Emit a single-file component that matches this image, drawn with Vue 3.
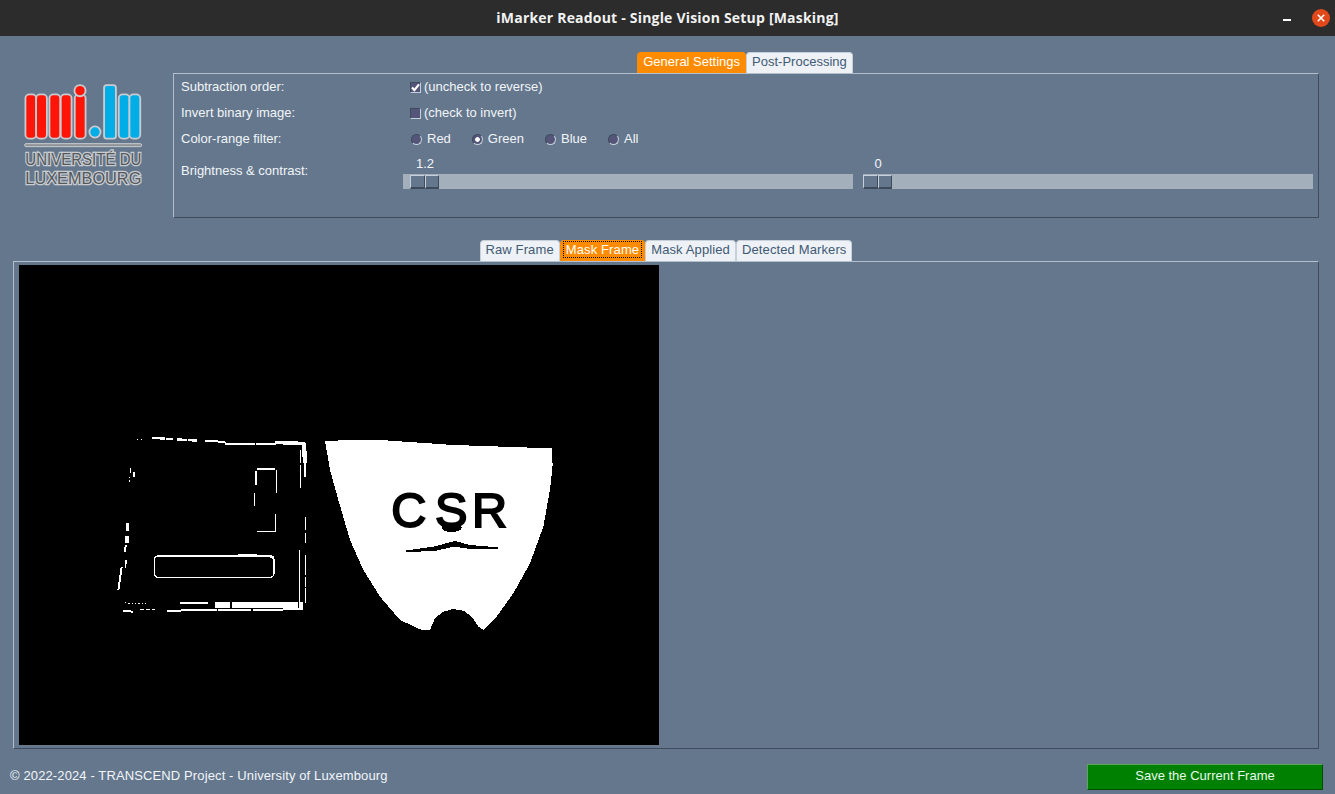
<template>
  <div class="window">
    <header class="titlebar">
      <span></span>
      <h1 class="titlebar__title">iMarker Readout - Single Vision Setup [Masking]</h1>
      <div class="titlebar__controls">
        <span class="titlebar__minimize"></span>
        <svg class="titlebar__close" width="18" height="18" viewBox="0 0 18 18">
          <circle cx="9" cy="9" r="9" fill="#e2491a" />
          <path d="M5.8 5.8l6.4 6.4M12.2 5.8l-6.4 6.4" stroke="#fff" stroke-width="1.6" />
        </svg>
      </div>
    </header>

    <section class="top">
      <div class="logo">
        <svg width="173" height="140" viewBox="0 0 519 420">
          <g class="logo__shapes" fill="#ff1408">
            <rect v-for="bar in redBars" :key="bar" :x="bar" y="106" width="27" height="127" rx="9" />
            <circle cx="240" cy="92" r="14" />
          </g>
          <g class="logo__shapes" fill="#00ade6">
            <circle cx="285" cy="216" r="14" />
            <rect x="315" y="78" width="30" height="155" rx="5" />
            <rect x="359" y="106" width="27" height="127" rx="9" />
            <rect x="391" y="106" width="27" height="127" rx="9" />
          </g>
          <rect x="74" y="251" width="351" height="9" rx="4" fill="#8f9397" stroke="#c8ccd1" stroke-width="3" />
          <text class="logo__text" x="76" y="315" textLength="348" lengthAdjust="spacingAndGlyphs">UNIVERSITÉ DU</text>
          <text class="logo__text" x="76" y="372" textLength="348" lengthAdjust="spacingAndGlyphs">LUXEMBOURG</text>
        </svg>
      </div>

      <div class="settings">
        <div class="tabs tabs--settings">
          <button
            v-for="tab in settingsTabs"
            :key="tab"
            class="tabs__tab"
            :class="{ 'tabs__tab--active': tab === 'General Settings' }"
          >
            <span class="tabs__label">{{ tab }}</span>
          </button>
        </div>

        <div class="panel settings__panel">
          <div class="field">
            <span class="field__label">Subtraction order:</span>
            <label class="check">
              <span class="check__box">
                <svg width="11" height="11" viewBox="0 0 11 11">
                  <path d="M2 5.5l2.4 2.6L9 2.4" fill="none" stroke="#fff" stroke-width="2.2" />
                </svg>
              </span>
              (uncheck to reverse)
            </label>
          </div>
          <div class="field">
            <span class="field__label">Invert binary image:</span>
            <label class="check">
              <span class="check__box"></span>
              (check to invert)
            </label>
          </div>
          <div class="field">
            <span class="field__label">Color-range filter:</span>
            <div class="radios">
              <label v-for="color in colors" :key="color" class="radio">
                <span class="radio__dot" :class="{ 'radio__dot--on': color === 'Green' }"></span>
                {{ color }}
              </label>
            </div>
          </div>
          <div class="field field--sliders">
            <span class="field__label field__label--slider">Brightness &amp; contrast:</span>
            <div class="sliders">
              <div v-for="slider in sliders" :key="slider.value" class="slider">
                <span class="slider__value" :style="{ marginLeft: slider.offset + 'px' }">{{ slider.value }}</span>
                <div class="slider__trough">
                  <div class="slider__thumb" :style="{ marginLeft: slider.offset + 'px' }">
                    <span class="slider__grip"></span>
                    <span class="slider__grip"></span>
                  </div>
                </div>
              </div>
            </div>
          </div>
        </div>
      </div>
    </section>

    <section class="frames">
      <div class="tabs tabs--frames">
        <button
          v-for="tab in frameTabs"
          :key="tab"
          class="tabs__tab"
          :class="{ 'tabs__tab--active': tab === 'Mask Frame' }"
        >
          <span class="tabs__label" :class="{ 'tabs__label--focus': tab === 'Mask Frame' }">{{ tab }}</span>
        </button>
      </div>
      <div class="panel frames__panel">
        <svg class="mask" width="640" height="480" viewBox="19 265 640 480" shape-rendering="crispEdges">
          <rect x="19" y="265" width="640" height="480" fill="#000" />

          <g transform="translate(110 420) scale(.3333)" stroke="#fff" fill="none">
            <line
              v-for="(s, i) in plateLines"
              :key="i"
              :x1="s[0]"
              :y1="s[1]"
              :x2="s[2]"
              :y2="s[3]"
              :stroke-width="s[4]"
              :stroke-dasharray="s[5]"
            />
            <rect x="133" y="408" width="359" height="64" rx="12" stroke-width="4" />
          </g>

          <g transform="translate(320 430) scale(.3333)">
            <polygon :points="shield" fill="#fff" />
            <text class="mask__csr" x="214 345 456" y="292">CSR</text>
            <ellipse cx="395" cy="293" rx="30" ry="13" fill="#000" />
            <polygon
              points="255,362 340,350 405,333 450,345 535,352 535,358 445,356 400,350 350,362 260,367"
              fill="#000"
            />
          </g>
        </svg>
      </div>
    </section>

    <footer class="footer">
      <span class="footer__text">© 2022-2024 - TRANSCEND Project - University of Luxembourg</span>
      <button class="footer__save">Save the Current Frame</button>
    </footer>
  </div>
</template>

<script setup>
const redBars = [79, 111, 151, 185, 227]
const settingsTabs = ['General Settings', 'Post-Processing']
const frameTabs = ['Raw Frame', 'Mask Frame', 'Mask Applied', 'Detected Markers']
const colors = ['Red', 'Green', 'Blue', 'All']

const sliders = [
  { value: '1.2', offset: 7 },
  { value: '0', offset: 0 },
]

// outline of the shield, in 3x crop coordinates
const shield =
  '15,32 180,30 400,45 695,55 698,105 690,180 670,290 630,400 580,490 530,560 490,600 475,590 455,560 430,542 400,537 370,545 345,565 330,600 305,600 240,570 180,500 130,420 90,330 55,210 30,120'

// x1, y1, x2, y2, width, dash
const plateLines = [
  [125, 53, 190, 58, 7, '40 3 20 3'],
  [200, 58, 260, 62, 7, '30 3 30 3'],
  [285, 62, 345, 66, 6],
  [345, 71, 500, 73, 7, '90 4 60 4'],
  [495, 68, 585, 70, 10],
  [582, 70, 585, 130, 13],
  [586, 130, 586, 172, 5],
  [572, 90, 572, 203, 4, '40 4 70 4'],
  [586, 290, 586, 380, 4, '40 8 30'],
  [586, 405, 586, 550, 4, '60 5 30 5'],
  [568, 390, 568, 545, 4],
  [170, 572, 580, 568, 6, '150 4 100 4'],
  [315, 555, 580, 555, 20, '45 5 200 3'],
  [210, 550, 295, 549, 7],
  [40, 573, 70, 575, 6],
  [90, 568, 135, 568, 3, '12 6'],
  [45, 549, 110, 552, 3, '4 6'],
  [82, 58, 100, 58, 4, '3 8'],
  [52, 310, 52, 332, 10],
  [50, 348, 50, 368, 12],
  [48, 375, 44, 395, 6],
  [48, 420, 46, 445, 5],
  [35, 440, 25, 510, 6],
  [62, 145, 62, 160, 4],
  [72, 157, 72, 170, 6],
  [58, 170, 58, 190, 3, '5 5'],
  [437, 152, 437, 196, 6],
  [440, 146, 496, 146, 6],
  [499, 150, 499, 220, 4],
  [433, 220, 433, 258, 4],
  [496, 282, 496, 335, 4],
  [441, 334, 496, 334, 4],
  [185, 408, 270, 409, 7],
  [385, 405, 440, 405, 5],
  [480, 408, 492, 414, 7],
]
</script>

<style scoped>
.window {
  width: 1335px;
  height: 794px;
  display: flex;
  flex-direction: column;
  overflow: hidden;
  background-color: #64778d;
  color: #f2f5f8;
  font-family: 'Liberation Sans', Arial, sans-serif;
  font-size: 13px;
}

.titlebar {
  height: 36px;
  flex: none;
  display: grid;
  grid-template-columns: 1fr auto 1fr;
  align-items: center;
  background-color: #2c2c2c;
}

.titlebar__title {
  margin: 0 0 1px;
  font-family: 'Open Sans', sans-serif;
  font-size: 14px;
  font-weight: 700;
  letter-spacing: 0.2px;
  color: #f2f2f2;
}

.titlebar__controls {
  display: flex;
  align-items: center;
  justify-content: flex-end;
  gap: 21px;
  padding-right: 5px;
}

.titlebar__minimize {
  width: 8px;
  height: 2px;
  margin-top: 4px;
  background-color: #fff;
}

.top {
  flex: none;
  display: flex;
  padding-top: 16px;
}

.logo {
  width: 173px;
  flex: none;
  padding-top: 8px;
}

.logo__shapes {
  stroke: #c8ccd1;
  stroke-width: 11px;
  paint-order: stroke;
}

.logo__text {
  font-size: 52px;
  fill: #55585b;
  stroke: #c8ccd1;
  stroke-width: 8px;
  paint-order: stroke;
}

.settings {
  width: 1146px;
}

.tabs {
  height: 21px;
  display: flex;
  justify-content: center;
}

.tabs--settings {
  padding-right: 2px;
}

.tabs__tab {
  height: 21px;
  padding: 0 2px 4px;
  border: 1px solid #c6d0da;
  border-bottom: none;
  border-radius: 4px 4px 0 0;
  background-color: #eef1f5;
  color: #3f5a75;
  font: inherit;
}

.tabs--frames .tabs__tab {
  letter-spacing: 0.12px;
}

.tabs__tab--active {
  border-color: #ff8c00;
  background-color: #ff8c00;
  color: #fff;
}

.tabs__label {
  display: block;
  padding: 0 2px;
  border: 1px solid transparent;
  line-height: 15px;
}

.tabs__label--focus {
  border: 1px dotted #000;
}

.panel {
  box-sizing: border-box;
  border: 1px solid #3d4b5c;
  border-top-color: #b4bfcc;
  border-left-color: #b4bfcc;
}

.settings__panel {
  height: 145px;
  padding: 0 5px 0 7px;
}

.field {
  box-sizing: border-box;
  height: 26px;
  padding-bottom: 2px;
  display: flex;
  align-items: center;
}

.field__label {
  width: 222px;
  flex: none;
}

.field__label--slider {
  margin-top: -2px;
}

.field--sliders {
  height: auto;
  padding: 1px 0 0;
}

.check {
  display: flex;
  align-items: center;
  gap: 3px;
  margin-left: 7px;
}

.check__box {
  width: 11px;
  height: 11px;
  margin-top: 3px;
  display: block;
  background-color: #55557a;
  border-top: 1px solid #3d4b5c;
  border-left: 1px solid #3d4b5c;
  border-right: 1px solid #c6d0da;
  border-bottom: 1px solid #c6d0da;
  box-sizing: border-box;
}

.check__box svg {
  display: block;
  margin: -1px;
}

.radios {
  display: flex;
  gap: 21px;
  margin-left: 8px;
}

.radio {
  display: flex;
  align-items: center;
  gap: 5px;
}

.radio__dot {
  width: 11px;
  height: 11px;
  margin-top: 2px;
  box-sizing: border-box;
  border-radius: 50%;
  border: 1px solid #3d4b5c;
  border-right-color: #c6d0da;
  border-bottom-color: #c6d0da;
  background-color: #55557a;
}

.radio__dot--on {
  background: radial-gradient(circle, #fff 0 2px, #55557a 2.6px);
}

.sliders {
  display: flex;
  gap: 10px;
}

.slider {
  width: 450px;
  display: flex;
  flex-direction: column;
}

.slider__value {
  width: 30px;
  height: 21px;
  line-height: 21px;
  text-align: center;
}

.slider__trough {
  height: 15px;
  display: flex;
  background-color: #a3b0bc;
}

.slider__thumb {
  width: 29px;
  height: 15px;
  display: flex;
}

.slider__grip {
  flex: 1;
  box-sizing: border-box;
  margin-top: 1px;
  background-color: #64778d;
  border-left: 1px solid #c6d0da;
  border-top: 1px solid #c6d0da;
  border-right: 1px solid #3d4b5c;
  border-bottom: 2px solid #3d4b5c;
}

.frames {
  flex: none;
  margin-top: 22px;
  padding: 0 16px 0 13px;
}

.frames__panel {
  height: 488px;
  padding: 3px 5px;
}

.mask {
  display: block;
}

.mask__csr {
  font-family: 'Liberation Sans', sans-serif;
  font-size: 146px;
  fill: #000;
  stroke: #000;
  stroke-width: 6px;
}

.footer {
  flex: 1;
  display: flex;
  align-items: center;
  justify-content: space-between;
  padding: 15px 12px 4px 10px;
}

.footer__text {
  margin-bottom: 4px;
  letter-spacing: 0.12px;
}

.footer__save {
  width: 236px;
  height: 26px;
  padding: 0 0 3px;
  border: 1px solid #004d00;
  border-top-color: #5aa65a;
  border-left-color: #5aa65a;
  background-color: #008000;
  color: #e9f8ee;
  font: inherit;
}
</style>

<style>
html,
body {
  margin: 0;
  background-color: #64778d;
}
</style>
